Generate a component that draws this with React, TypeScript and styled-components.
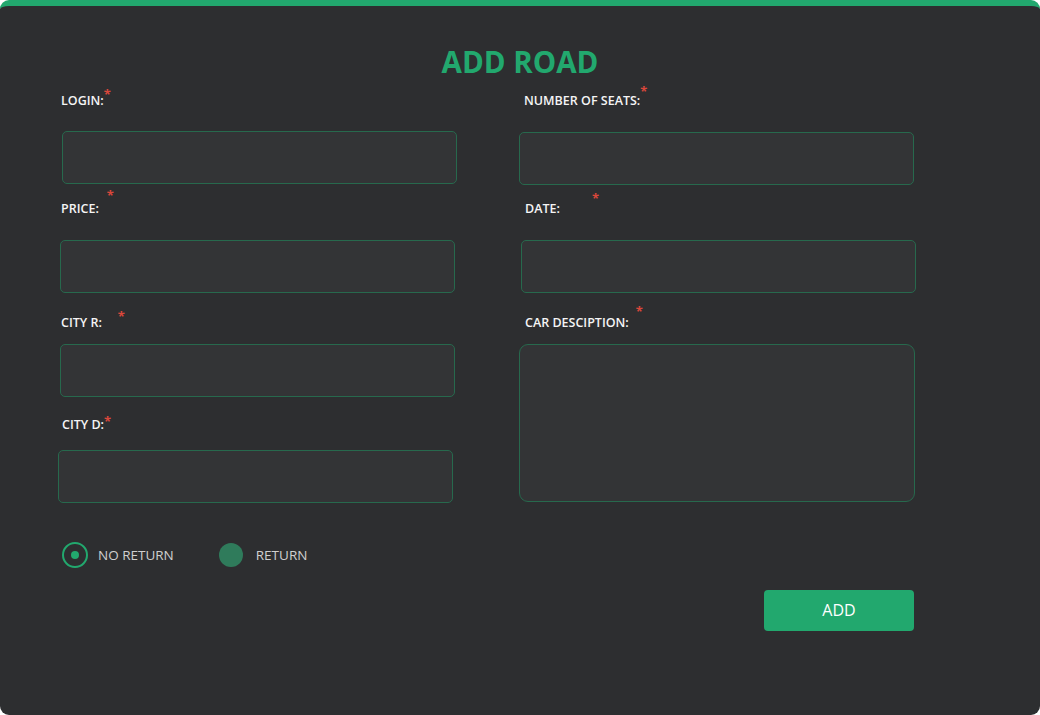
import React, {useState} from "react";
import styled, {createGlobalStyle} from "styled-components";

const GlobalStyle = createGlobalStyle`
  html, body {
    margin: 0;
    padding: 0;
    background: #ffffff;
  }

  body {
    font-family: "Open Sans", "Noto Sans", sans-serif;
  }
`

const Card = styled.form`
  box-sizing: border-box;
  width: 1040px;
  height: 715px;
  background-color: #2d2e30;
  border-top: 6px solid #22a86e;
  border-radius: 9px;
  padding: 38px 0 0 60px;
`

const Title = styled.h1`
  margin: 0 0 13px -60px;
  font-size: 29.5px;
  line-height: 36px;
  font-weight: 700;
  text-align: center;
  color: #22a86e;
`

const Columns = styled.div`
  display: grid;
  grid-template-columns: 395px 395px;
  column-gap: 65px;
  align-items: start;
`

const Column = styled.div`
  display: flex;
  flex-direction: column;
`

const Field = styled.div<{ top: number, gap: number }>`
  display: flex;
  flex-direction: column;
  margin-top: ${p => p.top}px;
  gap: ${p => p.gap}px;
`

const Label = styled.label<{ indent: number }>`
  display: block;
  height: 16px;
  line-height: 16px;
  margin-left: ${p => p.indent}px;
  font-size: 12.5px;
  font-weight: 600;
  color: #f5f5f5;
  text-transform: uppercase;
  white-space: nowrap;
`

const Star = styled.span<{ offset: number, raise: number }>`
  display: inline-block;
  margin-left: ${p => p.offset}px;
  transform: translateY(-${p => p.raise}px);
  font-size: 13px;
  line-height: 10px;
  font-weight: 700;
  color: #d9473b;
`

const Input = styled.input<{ shift: number }>`
  box-sizing: border-box;
  width: 395px;
  height: 53px;
  margin-left: ${p => p.shift}px;
  padding: 0 14px;
  background-color: #333436;
  border: 1px solid #27694d;
  border-radius: 5px;
  color: #eeeeee;
  font-family: inherit;
  font-size: 14px;
  outline: none;
`

const TextArea = styled.textarea`
  box-sizing: border-box;
  display: block;
  width: 396px;
  height: 158px;
  margin-left: -1px;
  padding: 12px 14px;
  background-color: #333436;
  border: 1px solid #27694d;
  border-radius: 9px;
  color: #eeeeee;
  font-family: inherit;
  font-size: 14px;
  resize: none;
  outline: none;
`

const RadioRow = styled.div`
  display: flex;
  align-items: center;
  gap: 44px;
  margin: 39px 0 0 2px;
`

const RadioOption = styled.label<{ spacing: number }>`
  display: flex;
  align-items: center;
  gap: ${p => p.spacing}px;
  cursor: pointer;
  font-size: 13.5px;
  color: #cfcfcf;
`

const RadioDot = styled.span<{ checked: boolean }>`
  box-sizing: border-box;
  width: 26px;
  height: 26px;
  border-radius: 50%;
  display: flex;
  align-items: center;
  justify-content: center;
  border: ${p => p.checked ? '2px solid #22a86e' : '1px solid transparent'};
  background-color: ${p => p.checked ? 'transparent' : '#2f7b5b'};
  background-clip: content-box;

  &::after {
    content: "";
    width: 8px;
    height: 8px;
    border-radius: 50%;
    background-color: #22a86e;
    display: ${p => p.checked ? 'block' : 'none'};
  }
`

const ButtonRow = styled.div`
  display: flex;
  justify-content: flex-end;
  width: 854px;
  margin-top: 22px;
`

const AddButton = styled.button`
  width: 150px;
  height: 41px;
  padding: 0 0 2px;
  border: none;
  border-radius: 4px;
  background-color: #22a86e;
  color: #ffffff;
  font-family: inherit;
  font-size: 16px;
  cursor: pointer;
`

interface FieldDef {
    label: string,
    top: number,
    gap: number,
    indent: number,
    shift: number,
    offset: number,
    raise: number,
}

const left: FieldDef[] = [
    {label: 'Login:', top: 0, gap: 22, indent: 1, shift: 2, offset: 0, raise: 6},
    {label: 'Price:', top: 17, gap: 23, indent: 1, shift: 0, offset: 8, raise: 13},
    {label: 'City R:', top: 22, gap: 13, indent: 1, shift: 0, offset: 16, raise: 6},
    {label: 'City D:', top: 20, gap: 17, indent: 2, shift: -2, offset: 0, raise: 3},
]

const right: FieldDef[] = [
    {label: 'Number of seats:', top: 0, gap: 23, indent: 4, shift: -1, offset: 0, raise: 9},
    {label: 'Date:', top: 16, gap: 23, indent: 5, shift: 1, offset: 32, raise: 10},
]

function App() {
    const [ret, setRet] = useState(false);

    const renderField = (f: FieldDef) => (
        <Field key={f.label} top={f.top} gap={f.gap}>
            <Label indent={f.indent}>
                {f.label}<Star offset={f.offset} raise={f.raise}>*</Star>
            </Label>
            <Input shift={f.shift}/>
        </Field>
    )

    return (
        <>
            <GlobalStyle/>
            <Card onSubmit={e => e.preventDefault()}>
                <Title>ADD ROAD</Title>
                <Columns>
                    <Column>{left.map(renderField)}</Column>
                    <Column>
                        {right.map(renderField)}
                        <Field top={22} gap={13}>
                            <Label indent={5}>
                                Car desciption:<Star offset={7} raise={11}>*</Star>
                            </Label>
                            <TextArea/>
                        </Field>
                    </Column>
                </Columns>
                <RadioRow>
                    <RadioOption spacing={10} onClick={() => setRet(false)}>
                        <RadioDot checked={!ret}/>
                        NO RETURN
                    </RadioOption>
                    <RadioOption spacing={12} onClick={() => setRet(true)}>
                        <RadioDot checked={ret}/>
                        RETURN
                    </RadioOption>
                </RadioRow>
                <ButtonRow>
                    <AddButton type="submit">ADD</AddButton>
                </ButtonRow>
            </Card>
        </>
    );
}

export default App;
